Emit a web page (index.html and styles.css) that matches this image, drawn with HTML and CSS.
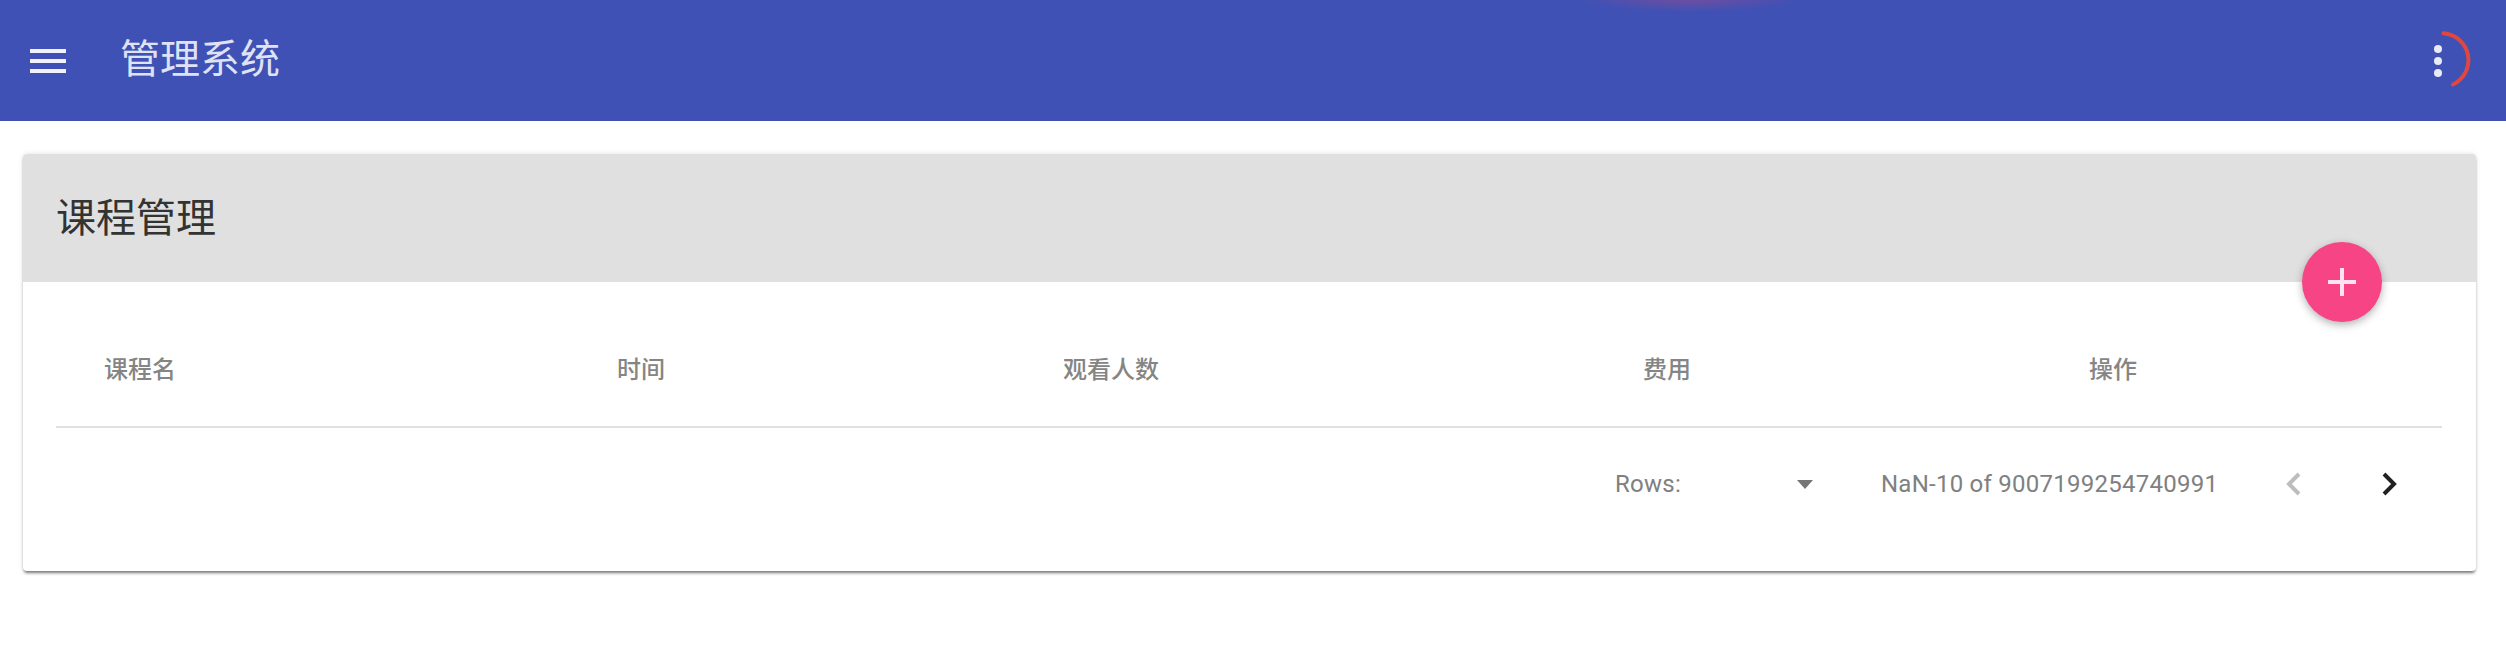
FILE: index.html
```html
<!DOCTYPE html>
<html lang="zh-CN">
<head>
  <meta charset="UTF-8" />
  <meta name="viewport" content="width=device-width, initial-scale=1.0" />
  <title>管理系统</title>
  <link rel="stylesheet" href="styles.css">
</head>
<body>

  <!-- Top bar -->
  <header class="app-bar">
    <div class="ripple"></div>
    <svg class="menu-icon" viewBox="0 0 36 24">
      <path d="M0 0h36v4H0zM0 10h36v4H0zM0 20h36v4H0z" />
    </svg>
    <h1 class="app-title">管理系统</h1>
    <div class="more-btn">
      <svg class="spinner" viewBox="0 0 60 60">
        <path d="M25.5 5.2A27 27 0 0 1 35 56.5" />
      </svg>
      <span class="dot"></span>
      <span class="dot"></span>
      <span class="dot"></span>
    </div>
  </header>

  <main class="content">
    <section class="card">
      <div class="card-head">
        <h2>课程管理</h2>
        <button class="add-btn">
          <svg viewBox="0 0 28 28"><path d="M12 0h4v12h12v4H16v12h-4V16H0v-4h12z" /></svg>
        </button>
      </div>

      <table class="course-table">
        <colgroup>
          <col class="col-name">
          <col class="col-time">
          <col class="col-views">
          <col class="col-fee">
          <col>
        </colgroup>
        <thead>
          <tr>
            <th>课程名</th>
            <th>时间</th>
            <th>观看人数</th>
            <th>费用</th>
            <th>操作</th>
          </tr>
        </thead>
      </table>

      <div class="pager">
        <span class="rows-label">Rows:</span>
        <span class="rows-arrow"></span>
        <span class="page-info">NaN-10 of 9007199254740991</span>
        <svg class="chevron prev" viewBox="0 0 16 24"><path d="M14 2L4 12l10 10" /></svg>
        <svg class="chevron next" viewBox="0 0 16 24"><path d="M2 2l10 10L2 22" /></svg>
      </div>
    </section>
  </main>

</body>
</html>
```

FILE: styles.css
```css
* {
  margin: 0;
  padding: 0;
  box-sizing: border-box;
  font-family: 'Roboto', 'Noto Sans CJK SC', sans-serif;
}
body {
  min-height: 100vh;
  background: #fff;
}
/* Top bar */
.app-bar {
  height: 121px;
  background: #3f51b5;
  display: flex;
  align-items: center;
  padding: 0 30px;
  position: relative;
  overflow: hidden;
}
.ripple {
  position: absolute;
  top: -14px;
  left: 1580px;
  width: 220px;
  height: 26px;
  border-radius: 50%;
  background: radial-gradient(closest-side, rgba(224, 70, 110, 0.3), rgba(224, 70, 110, 0));
}
.menu-icon {
  width: 36px;
  height: 24px;
  fill: #f1f2fb;
  flex: none;
}
.app-title {
  margin-left: 54px;
  padding-bottom: 10px;
  font-size: 40px;
  font-weight: 400;
  color: #dfe2f4;
  flex: 1;
}
.more-btn {
  position: relative;
  width: 8px;
  margin-right: 34px;
  display: flex;
  flex-direction: column;
  gap: 4px;
}
.dot {
  width: 8px;
  height: 8px;
  border-radius: 50%;
  background: #e8eaf6;
}
.spinner {
  position: absolute;
  top: -17px;
  left: -16px;
  width: 60px;
  height: 60px;
  fill: none;
  stroke: #e0473f;
  stroke-width: 4;
  stroke-linecap: round;
}
/* Card */
.content {
  padding: 33px 30px 40px 23px;
}
.card {
  background: #fff;
  border-radius: 4px;
  box-shadow: 0 3px 3px -1px rgba(0, 0, 0, 0.5), 0 0 5px rgba(0, 0, 0, 0.12);
  padding-bottom: 31px;
}
.card-head {
  height: 128px;
  background: #e0e0e0;
  border-radius: 4px 4px 0 0;
  display: flex;
  align-items: center;
  padding-left: 33px;
  padding-bottom: 6px;
  position: relative;
}
.card-head h2 {
  font-size: 40px;
  font-weight: 400;
  color: #333;
}
.add-btn {
  position: absolute;
  top: 88px;
  right: 94px;
  width: 80px;
  height: 80px;
  border: none;
  border-radius: 50%;
  background: #f64484;
  box-shadow: 0 3px 8px rgba(0, 0, 0, 0.3);
  display: flex;
  align-items: center;
  justify-content: center;
}
.add-btn svg {
  width: 28px;
  height: 28px;
  fill: #ffe3ee;
}
/* Table */
.course-table {
  width: 2386px;
  margin: 31px 0 0 33px;
  border-collapse: collapse;
  table-layout: fixed;
}
.col-name {
  width: 513px;
}
.col-time {
  width: 446px;
}
.col-views {
  width: 580px;
}
.col-fee {
  width: 446px;
}
.course-table th {
  height: 114px;
  padding-left: 48px;
  padding-bottom: 4px;
  text-align: left;
  font-size: 24px;
  font-weight: 500;
  color: #858585;
  border-bottom: 2px solid #e0e0e0;
}
/* Pager */
.pager {
  height: 112px;
  display: flex;
  align-items: center;
  padding-left: 1592px;
  font-size: 24px;
  letter-spacing: 0.25px;
  color: #808080;
}
.rows-label {
  width: 182px;
}
.rows-arrow {
  width: 0;
  height: 0;
  border-left: 8px solid transparent;
  border-right: 8px solid transparent;
  border-top: 9px solid #757575;
}
.page-info {
  margin-left: 68px;
  width: 404px;
}
.chevron {
  width: 16px;
  height: 24px;
  fill: none;
  stroke-width: 4;
  flex: none;
}
.prev {
  stroke: #bdbdbd;
}
.next {
  margin-left: 81px;
  stroke: #212121;
}
```
